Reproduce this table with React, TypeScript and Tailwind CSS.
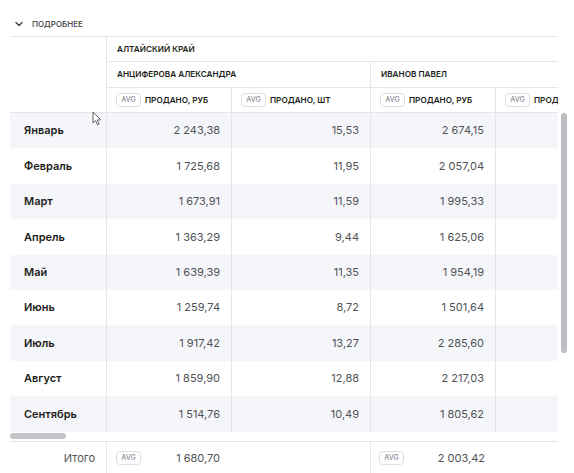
import { ChevronDown } from 'lucide-react'

const ROWS = [
  ['Январь', '2 243,38', '15,53', '2 674,15'],
  ['Февраль', '1 725,68', '11,95', '2 057,04'],
  ['Март', '1 673,91', '11,59', '1 995,33'],
  ['Апрель', '1 363,29', '9,44', '1 625,06'],
  ['Май', '1 639,39', '11,35', '1 954,19'],
  ['Июнь', '1 259,74', '8,72', '1 501,64'],
  ['Июль', '1 917,42', '13,27', '2 285,60'],
  ['Август', '1 859,90', '12,88', '2 217,03'],
  ['Сентябрь', '1 514,76', '10,49', '1 805,62'],
]

function Avg() {
  return (
    <span className="inline-flex h-[14px] w-[25px] shrink-0 items-center justify-center rounded-[4px] border border-[#dcdde0] bg-white text-[7px] font-medium text-[#8a8d93]">
      AVG
    </span>
  )
}

function MetricHead({ label, w }: { label: string; w: string }) {
  return (
    <div className={`${w} flex h-full shrink-0 items-center gap-[4px] border-r border-[#e4e5e8] pl-[9px] whitespace-nowrap overflow-hidden`}>
      <Avg />
      <span>{label}</span>
    </div>
  )
}

export default function App() {
  return (
    <div className="relative h-[473px] w-[574px] overflow-hidden bg-white font-['Inter',sans-serif] text-[#1d1e20]">
      <div className="flex h-[36px] items-center gap-[7px] pl-[13px] pt-[12px] text-[8px] font-medium text-[#3a3b3e]">
        <ChevronDown size={12} strokeWidth={2.5} />
        <span>ПОДРОБНЕЕ</span>
      </div>

      <div className="ml-[10px] w-[548px] overflow-hidden border-t border-[#e4e5e8]">
        {/* header */}
        <div className="flex border-b border-[#e4e5e8] text-[8.2px] font-semibold">
          <div className="h-[75px] w-[97px] shrink-0 border-r border-[#e4e5e8]" />
          <div className="flex flex-col">
            <div className="flex h-[25px] w-[451px] items-center border-b border-[#e4e5e8] pl-[10px]">АЛТАЙСКИЙ КРАЙ</div>
            <div className="flex h-[26px] border-b border-[#e4e5e8]">
              <div className="flex w-[264px] shrink-0 items-center border-r border-[#e4e5e8] pl-[10px]">АНЦИФЕРОВА АЛЕКСАНДРА</div>
              <div className="flex w-[200px] shrink-0 items-center pl-[10px]">ИВАНОВ ПАВЕЛ</div>
            </div>
            <div className="flex h-[24px]">
              <MetricHead label="ПРОДАНО, РУБ" w="w-[125px]" />
              <MetricHead label="ПРОДАНО, ШТ" w="w-[139px]" />
              <MetricHead label="ПРОДАНО, РУБ" w="w-[125px]" />
              <MetricHead label="ПРОДАНО, ШТ" w="w-[125px]" />
            </div>
          </div>
        </div>

        {/* body */}
        {ROWS.map((r, i) => (
          <div key={r[0]} className={`flex h-[35.4px] text-[11px] ${i % 2 === 0 ? 'bg-[#f5f6f9]' : 'bg-white'}`}>
            <div className="flex w-[97px] shrink-0 items-center border-r border-[#e4e5e8] pl-[14px] font-semibold text-[#1d1e20]">{r[0]}</div>
            <div className="flex w-[125px] shrink-0 items-center justify-end border-r border-[#e4e5e8] pr-[11px] text-[#505257]">{r[1]}</div>
            <div className="flex w-[139px] shrink-0 items-center justify-end border-r border-[#e4e5e8] pr-[11px] text-[#505257]">{r[2]}</div>
            <div className="flex w-[125px] shrink-0 items-center justify-end border-r border-[#e4e5e8] pr-[11px] text-[#505257]">{r[3]}</div>
            <div className="w-[125px] shrink-0 border-r border-[#e4e5e8]" />
          </div>
        ))}

        {/* horizontal scrollbar */}
        <div className="flex h-[10px] items-center border-b border-[#e4e5e8] pb-[1px]">
          <div className="h-[6px] w-[56px] rounded-full bg-[#c4c5c8]" />
        </div>

        {/* footer */}
        <div className="flex h-[33px] text-[11px] text-[#505257]">
          <div className="flex w-[97px] shrink-0 items-center justify-end border-r border-[#e4e5e8] pr-[11px]">Итого</div>
          <div className="flex w-[264px] shrink-0 items-center border-r border-[#e4e5e8] pl-[9px]">
            <Avg />
            <span className="ml-auto pr-[150px]">1 680,70</span>
          </div>
          <div className="flex w-[264px] shrink-0 items-center pl-[8px]">
            <Avg />
            <span className="ml-auto pr-[150px]">2 003,42</span>
          </div>
        </div>
      </div>

      {/* vertical scrollbar */}
      <div className="absolute left-[561px] top-[113px] h-[240px] w-[6px] rounded-full bg-[#bdbec1]" />

      {/* cursor */}
      <svg className="absolute left-[92px] top-[111px]" width="10" height="15" viewBox="0 0 10 15">
        <path d="M1 1 L1 12 L3.6 9.6 L5.6 13.8 L7.2 13 L5.3 8.9 L8.8 8.9 Z" fill="white" stroke="#555" strokeWidth="0.9" strokeLinejoin="round" />
      </svg>
    </div>
  )
}
